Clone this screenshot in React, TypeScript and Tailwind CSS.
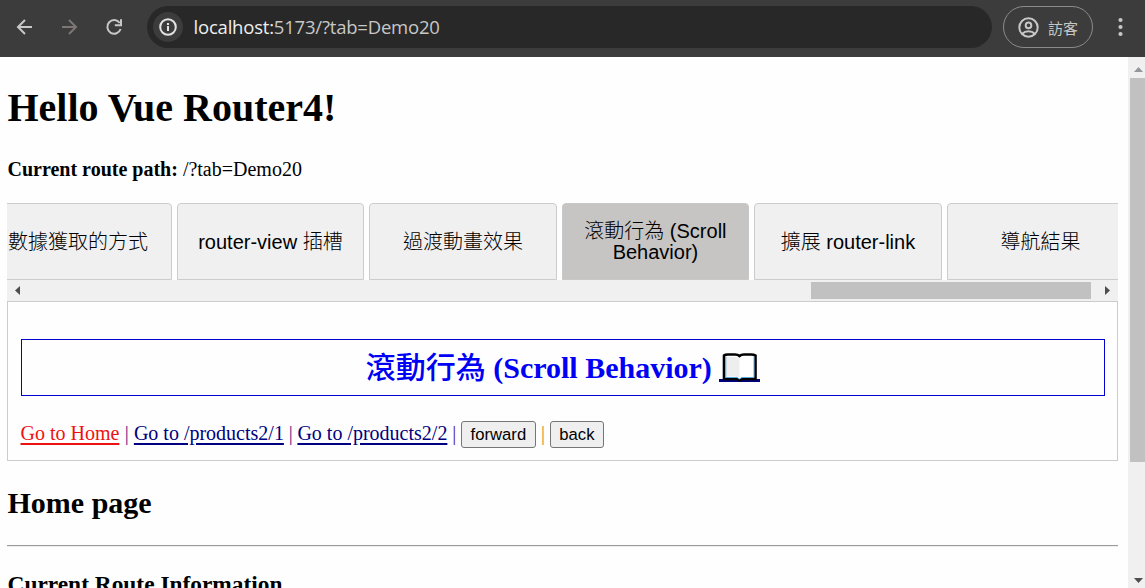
import type { ReactNode } from 'react';

const serif = "font-['Liberation_Serif','Noto_Sans_CJK_TC',serif]";
const sans = "font-['Liberation_Sans','Noto_Sans_CJK_TC',sans-serif]";

function Toolbar() {
  return (
    <header className="flex h-[57px] shrink-0 items-center bg-[#3c3c3c] pb-[3px] font-['Open_Sans','Noto_Sans_CJK_TC',sans-serif]">
      <svg className="ml-[15px] h-5 w-5" viewBox="0 0 20 20" fill="none" stroke="#c7c7c7" strokeWidth="2">
        <path d="M17 10H3.5M10 3L3 10L10 17" />
      </svg>
      <svg className="ml-[25px] h-5 w-5" viewBox="0 0 20 20" fill="none" stroke="#7c7776" strokeWidth="2">
        <path d="M2 10H15.5M9 3L16 10L9 17" />
      </svg>
      <svg className="ml-[24px] h-5 w-5" viewBox="0 0 20 20" fill="none" stroke="#c7c7c7" strokeWidth="2">
        <path d="M15.7 6A6.8 6.8 0 1 0 16.6 12M17 2.2V8.2H10.8" />
      </svg>
      <div className="ml-[23px] flex h-[42px] w-[845px] items-center rounded-full bg-[#282828] pl-[6px]">
        <span className="flex h-[30px] w-[30px] items-center justify-center rounded-full bg-[#3c3c3c]">
          <svg className="h-[18px] w-[18px]" viewBox="0 0 18 18" fill="none" stroke="#e3e3e3" strokeWidth="2">
            <circle cx="9" cy="9" r="7.8" />
            <path d="M9 8V13M9 5V7" />
          </svg>
        </span>
        <span className="ml-[10.5px] text-[18.5px] leading-6 tracking-[-0.2px] whitespace-nowrap text-[#c7c7c7]">
          <span className="text-[#eeeeee]">localhost:</span>5173/?tab=Demo20
        </span>
      </div>
      <div className="ml-[11px] flex h-[42px] w-[90px] items-center rounded-full border border-[#8b8b8b] pl-[14px] text-[#c7c7c7]">
        <svg className="h-[21px] w-[21px]" viewBox="0 0 21 21" fill="none" stroke="currentColor" strokeWidth="2">
          <circle cx="10.5" cy="10.5" r="9.2" />
          <circle cx="10.5" cy="8.4" r="2.8" />
          <path d="M4.2 16.8C7.6 13.4 13.4 13.4 16.8 16.8" />
        </svg>
        <span className="ml-[9px] pt-[2px] text-[15px] leading-5">訪客</span>
      </div>
      <svg className="ml-[25px] h-5 w-[5px]" viewBox="0 0 5 20" fill="#c7c7c7">
        <circle cx="2.5" cy="3" r="2.1" />
        <circle cx="2.5" cy="10" r="2.1" />
        <circle cx="2.5" cy="17" r="2.1" />
      </svg>
    </header>
  );
}

function Tab({ children, active = false }: { children: ReactNode; active?: boolean }) {
  return (
    <button
      className={`flex h-[77px] w-[187.5px] shrink-0 items-center justify-center rounded-t-[4px] border px-[20px] pt-[1px] text-center text-[20px] leading-[21px] font-light text-black ${
        active ? 'border-[#c8c8c8] bg-[#c6c5c3]' : 'border-[#cccccc] bg-[#f0f0f0]'
      }`}
    >
      {children}
    </button>
  );
}

function TabStrip() {
  return (
    <nav className="w-[1111px]">
      <div className={`flex justify-end overflow-hidden ${sans}`}>
        <div className="-mr-[16.2px] flex gap-[5px]">
          <Tab>數據獲取的方式</Tab>
          <Tab>router-view 插槽</Tab>
          <Tab>過渡動畫效果</Tab>
          <Tab active>滾動行為 (Scroll Behavior)</Tab>
          <Tab>擴展 router-link</Tab>
          <Tab>導航結果</Tab>
        </div>
      </div>
      <div className="flex h-[21px] items-center bg-[#f0f0f0] pr-[8px] pl-[8px]">
        <svg className="h-[9px] w-[5px]" viewBox="0 0 5 9" fill="#4d4d4d">
          <path d="M5 0V9L0 4.5Z" />
        </svg>
        <div className="ml-auto h-[17px] w-[280px] bg-[#c0c1c0]" />
        <svg className="ml-[14px] h-[9px] w-[5px]" viewBox="0 0 5 9" fill="#4d4d4d">
          <path d="M0 0V9L5 4.5Z" />
        </svg>
      </div>
    </nav>
  );
}

function OpenBook() {
  return (
    <svg className="ml-[7.5px] h-[31px] w-[41px] shrink-0" viewBox="0 0 41 31">
      <path d="M0 27H41V30H0Z" fill="#000080" />
      <path
        d="M5 3.5Q6 2.5 9 2.5H16Q19 2.5 20.5 4Q22 2.5 25 2.5H32Q35 2.5 36.5 3.5V27H23L20.5 28.5L18 27H5Z"
        fill="#fff"
        stroke="#000"
        strokeWidth="2.6"
      />
      <path d="M7 5H15Q18 5 20.5 7V26Q18 24.5 15 24.5H7Z" fill="#eeeeee" />
      <path d="M6.8 4.5V25.5H18L20.5 27L23 25.5H35V4.5" fill="none" stroke="#50a5dc" strokeWidth="0.9" />
    </svg>
  );
}

function Panel() {
  const link = 'underline decoration-2 underline-offset-[3px]';
  const button =
    "h-[27px] rounded-[3px] border border-[#767676] bg-[#efefef] pt-[1px] text-[16.67px] leading-6 text-black font-['Liberation_Sans',sans-serif]";
  return (
    <section className="h-[160px] w-[1111px] border border-[#cccccc] px-[13px] pt-[37px] pr-[12px]">
      <h2 className="flex h-[57px] items-center justify-center border border-[#0000d0] text-[30px] leading-[34px] font-bold text-[#0000f5]">
        <span>
          <span className="font-medium">滾動行為</span> (Scroll Behavior)
        </span>
        <OpenBook />
      </h2>
      <div className="mt-[24px] flex h-[28px] items-center whitespace-nowrap text-[#551a8b]">
        <a className={`-mt-[2px] -ml-[0.5px] text-[#ee1111] ${link}`}>Go to Home</a>
        <span className="-mt-[2px] w-[14.5px] text-center">|</span>
        <a className={`-mt-[2px] text-[#000080] ${link}`}>Go to /products2/1</a>
        <span className="-mt-[2px] w-[13.5px] text-center">|</span>
        <a className={`-mt-[2px] text-[#000080] ${link}`}>Go to /products2/2</a>
        <span className="-mt-[2px] w-[13.5px] text-center">|</span>
        <button className={`w-[75px] ${button}`}>forward</button>
        <span className="-mt-[2px] w-[14px] text-center text-[#d08a30]">|</span>
        <button className={`w-[54px] ${button}`}>back</button>
      </div>
    </section>
  );
}

function PageScrollbar() {
  return (
    <div className="flex w-[17px] shrink-0 flex-col items-end bg-[#f0f0f0]">
      <div className="flex h-[21px] w-[15px] items-center justify-center pt-[3px]">
        <svg className="ml-[2px] h-[5px] w-[9px]" viewBox="0 0 9 5" fill="#939799">
          <path d="M0 5H9L4.5 0Z" />
        </svg>
      </div>
      <div className="h-[384px] w-[15px] bg-[#c0c1c0]" />
      <div className="mt-auto flex h-[15px] w-[15px] justify-center pt-[5px]">
        <svg className="ml-[2px] h-[5px] w-[9px]" viewBox="0 0 9 5" fill="#4d4d4d">
          <path d="M0 0H9L4.5 5Z" />
        </svg>
      </div>
    </div>
  );
}

export default function App() {
  return (
    <div className="flex h-[588px] w-[1145px] flex-col overflow-hidden bg-[#fefefe]">
      <Toolbar />
      <div className="flex min-h-0 flex-1">
        <main className={`min-w-0 flex-1 overflow-hidden pl-[7px] text-[20px] leading-6 text-black ${serif}`}>
          <h1 className="mt-[28px] pl-[0.5px] text-[40px] leading-[46px] font-bold">Hello Vue Router4!</h1>
          <p className="mt-[26px] mb-[22px] pl-[0.5px]">
            <strong>Current route path:</strong> /?tab=Demo20
          </p>
          <TabStrip />
          <Panel />
          <h2 className="mt-[25px] pl-[0.5px] text-[30px] leading-[34px] font-bold">Home page</h2>
          <hr className="mt-[25px] h-[2px] w-[1111px] border-t border-b border-t-[#9a9a9a] border-b-[#eeeeee]" />
          <h3 className="mt-[23px] pl-[0.5px] text-[23.4px] leading-[28px] font-bold">Current Route Information</h3>
        </main>
        <PageScrollbar />
      </div>
    </div>
  );
}
